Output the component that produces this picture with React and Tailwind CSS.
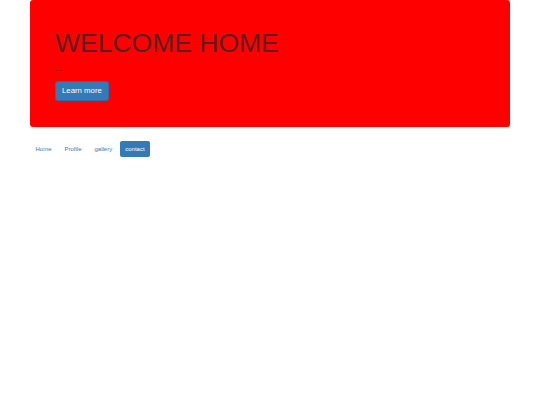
import React from "react";

const links = ["Home", "Profile", "gallery", "contact"];

export default function App() {
  const active = "contact";
  return (
    <div className="min-h-[405px] bg-white px-[30px] font-['Liberation_Sans',Arial,sans-serif] text-[#333]">
      {/* jumbotron */}
      <div className="mb-[14px] rounded-[3px] bg-[#ff0000] px-[25px] pt-[21px] pb-[20px]">
        <h1 className="mt-[7px] mb-[4px] text-[26.5px] leading-[30px] text-[#5e1d1d]">WELCOME HOME</h1>
        <p className="mb-[1px] text-[9px] leading-[13px] text-[#6b1f1f]">...</p>
        <p className="mb-[6px]">
          <a
            href="#"
            className="inline-block rounded-[3px] border border-[#2e6da4] bg-[#337ab7] px-[6px] py-[3px] text-[7.8px] leading-[12px] text-white"
          >
            Learn more
          </a>
        </p>
      </div>

      {/* nav pills */}
      <ul className="flex gap-[2px] text-[6px] leading-[9px]">
        {links.map((l) => (
          <li key={l}>
            <a
              href="#"
              className={
                l === active
                  ? "block rounded-[2px] bg-[#337ab7] px-[5.5px] py-[3.5px] text-white"
                  : "block rounded-[2px] px-[5.5px] py-[3.5px] text-[#337ab7]"
              }
            >
              {l}
            </a>
          </li>
        ))}
      </ul>
    </div>
  );
}
